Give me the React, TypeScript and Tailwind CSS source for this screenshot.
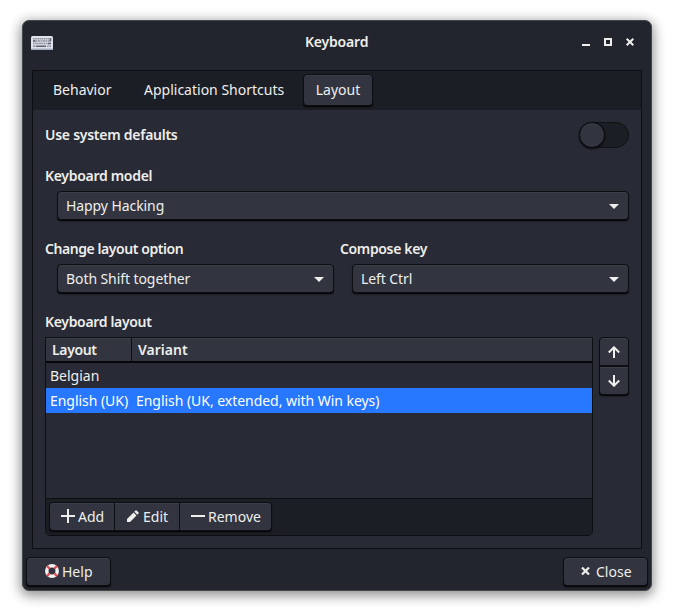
import type { ReactNode } from "react";

const raised =
  "border border-[#0d0e12] bg-[#323540] shadow-[inset_0_1px_0_#3c3f49,0_1px_0_#050608,0_2px_2px_rgba(0,0,0,0.25)]";

function Label({ children, className = "tracking-[-0.26px]" }: { children: ReactNode; className?: string }) {
  return <div className={`whitespace-nowrap font-semibold ${className}`}>{children}</div>;
}

function Combo({ children, className = "" }: { children: ReactNode; className?: string }) {
  return (
    <button className={`flex h-[29px] items-center justify-between rounded-[4px] pr-[9px] pl-2 tracking-[-0.08px] whitespace-nowrap ${raised} ${className}`}>
      {children}
      <svg className="mt-px" width="10" height="5" viewBox="0 0 10 5" fill="#eeeeec">
        <path d="M0 0h10L5 5z" />
      </svg>
    </button>
  );
}

function KeyboardIcon() {
  return (
    <svg className="mt-px" width="22" height="14" viewBox="0 0 22 14">
      <rect width="22" height="14" rx="1.5" fill="#dfe3ed" />
      <rect y="12.5" width="22" height="1.5" rx=".7" fill="#a3adbf" />
      <g fill="none" stroke="#8b909c" strokeWidth="1.5">
        <path d="M2 2.8h18" strokeDasharray="1.6 .5" />
        <path d="M2 5h18" strokeDasharray="2 .5" />
        <path d="M2 7.6h18" strokeDasharray="1.6 .5" />
        <path d="M2 10.2h2.5M16 10.2h1.6M18.2 10.2H20" />
        <path d="M5 10.2h10M19.5 2v3.2M2 5h2.5M17 7.6h3" stroke="#5f6470" />
      </g>
    </svg>
  );
}

function LifeRing() {
  return (
    <svg className="-mt-0.5" width="14" height="14" viewBox="0 0 14 14" fill="none">
      <circle cx="7" cy="7" r="5.2" stroke="#f1f1ef" strokeWidth="3.5" />
      <g stroke="#e5484d" strokeWidth="2.2">
        <path d="M2 2l2.6 2.6M12 2L9.4 4.6M2 12l2.6-2.6M12 12L9.4 9.4" />
      </g>
    </svg>
  );
}

export default function App() {
  return (
    <div className="h-[615px] w-[674px] overflow-hidden bg-white pt-5 pl-[22px] font-['Noto_Sans','Open_Sans',sans-serif] text-[14px] leading-5 text-[#eeeeec]">
      <div className="flex h-[571px] w-[630px] flex-col rounded-[7px] border border-[#45484b] bg-[#23252e] shadow-[0_3px_12px_2px_rgba(0,0,0,0.42)]">
        <header className="flex h-[49px] shrink-0 items-start pt-[14px] pl-2">
          <KeyboardIcon />
          <Label className="-mt-[3px] ml-[252px] w-[63px] tracking-[-0.2px]">Keyboard</Label>
          <svg className="ml-[213px]" width="54" height="14" viewBox="0 0 54 14" fill="none" stroke="#eeeeec" strokeWidth="2">
            <path d="M1 10h8" />
            <path d="M24 4h6v6h-6z" />
            <path d="M45.7 3.7l6.6 6.6m0-6.6l-6.6 6.6" />
          </svg>
        </header>

        <main className="ml-[9px] flex h-[479px] w-[610px] shrink-0 flex-col border border-[#0d0e12] bg-[#282a35]">
          <nav className="flex h-[39px] shrink-0 items-start bg-[#1c1e25] pt-[3px]">
            <div className="flex h-8 w-[99px] items-center pl-5">Behavior</div>
            <div className="flex h-8 w-[171px] items-center pl-3 whitespace-nowrap">Application Shortcuts</div>
            <div className={`flex h-8 w-[70px] items-center justify-center rounded-[4px] ${raised}`}>Layout</div>
          </nav>

          <section className="flex flex-col px-3 pt-3">
            <div className="flex h-[26px] items-center justify-between">
              <Label>Use system defaults</Label>
              <div className="h-[26px] w-[50px] rounded-full border border-[#101115] bg-[#1c1e25]">
                <div className="-mt-px -ml-px size-[26px] rounded-full border border-[#0a0b0e] bg-[#323540] shadow-[inset_0_1px_0_#3c3f49,0_1px_2px_#08090b]" />
              </div>
            </div>

            <Label className="mt-[18px] h-[25px] tracking-[-0.3px]">Keyboard model</Label>
            <Combo className="ml-3">Happy Hacking</Combo>

            <div className="mt-[19px] flex gap-[6px]">
              <div className="flex w-[289px] flex-col">
                <Label className="h-[25px] tracking-[-0.43px]">Change layout option</Label>
                <Combo className="ml-3">Both Shift together</Combo>
              </div>
              <div className="flex w-[289px] flex-col">
                <Label className="h-[25px] tracking-[-0.36px]">Compose key</Label>
                <Combo className="ml-3">Left Ctrl</Combo>
              </div>
            </div>

            <Label className="mt-[19px] h-[25px] tracking-[-0.33px]">Keyboard layout</Label>
            <div className="flex gap-[6px]">
              <div className="flex h-[199px] w-[548px] flex-col rounded-b-[5px] border border-[#0d0e12]">
                <div className="flex h-[25px] shrink-0 border-b-2 border-[#050608] bg-[#323540] shadow-[inset_0_1px_0_#3c3f49]">
                  <Label className="w-[86px] border-r border-[#0d0e12] pt-0.5 pl-[6px] tracking-[-0.35px]">Layout</Label>
                  <Label className="pt-0.5 pl-[6px]">Variant</Label>
                </div>
                <div className="flex h-[25px] shrink-0 items-center pl-1">Belgian</div>
                <div className="flex h-[25px] shrink-0 items-center bg-[#2777ff] pl-1 tracking-[-0.04px] whitespace-nowrap text-white">
                  <span className="w-[86px]">English (UK)</span>
                  <span>English (UK, extended, with Win keys)</span>
                </div>
                <div className="grow" />
                <div className="h-[37px] shrink-0 rounded-b-[4px] border-t border-[#0d0e12] bg-[#1c1e25] pt-[3px] pl-[3px]">
                  <div className={`flex h-[29px] w-[223px] rounded-[4px] ${raised}`}>
                    <div className="flex w-[65px] items-center border-r border-[#0d0e12] pl-[11px]">
                      <svg className="-mt-px mr-[3px]" width="14" height="14" viewBox="0 0 14 14" stroke="#eeeeec" strokeWidth="2">
                        <path d="M0 7h14M7 0v14" />
                      </svg>
                      Add
                    </div>
                    <div className="flex w-[65px] items-center border-r border-[#0d0e12] pl-3">
                      <svg className="-mt-px mr-1" width="12" height="12" viewBox="0 0 12 12" fill="#eeeeec">
                        <path d="M0 12V9l6.5-6.5 3 3L3 12zM7.3 1.7L8.6.4Q9 0 9.5.4l2.1 2.1q.4.5 0 .9L10.3 4.7z" />
                      </svg>
                      Edit
                    </div>
                    <div className="flex grow items-center pl-[11px]">
                      <span className="-mt-px mr-[3px] h-[2px] w-[14px] bg-[#eeeeec]" />
                      Remove
                    </div>
                  </div>
                </div>
              </div>
              <div className={`flex h-[58px] w-[30px] flex-col rounded-[4px] ${raised}`}>
                <div className="flex h-[29px] items-center justify-center border-b-2 border-[#0d0e12]">
                  <svg width="12" height="12" viewBox="0 0 12 12" fill="none" stroke="#eeeeec" strokeWidth="2">
                    <path d="M6 12V1M.8 6.5L6 1.3l5.2 5.2" />
                  </svg>
                </div>
                <div className="flex grow items-center justify-center shadow-[inset_0_1px_0_#3c3f49]">
                  <svg width="12" height="12" viewBox="0 0 12 12" fill="none" stroke="#eeeeec" strokeWidth="2">
                    <path d="M6 0v11M.8 5.5L6 10.7l5.2-5.2" />
                  </svg>
                </div>
              </div>
            </div>
          </section>
        </main>

        <footer className="mt-2 flex justify-between pr-[3px] pl-[3px]">
          <button className={`flex h-[29px] w-[85px] items-center rounded-[4px] pl-[18px] ${raised}`}>
            <LifeRing />
            <span className="ml-[3px]">Help</span>
          </button>
          <button className={`flex h-[29px] w-[85px] items-center rounded-[4px] pl-[17px] ${raised}`}>
            <svg className="-mt-px" width="9" height="8" viewBox="0 0 9 8" stroke="#eeeeec" strokeWidth="2.2">
              <path d="M1 .5l7 7m0-7l-7 7" />
            </svg>
            <span className="ml-[6px]">Close</span>
          </button>
        </footer>
      </div>
    </div>
  );
}
